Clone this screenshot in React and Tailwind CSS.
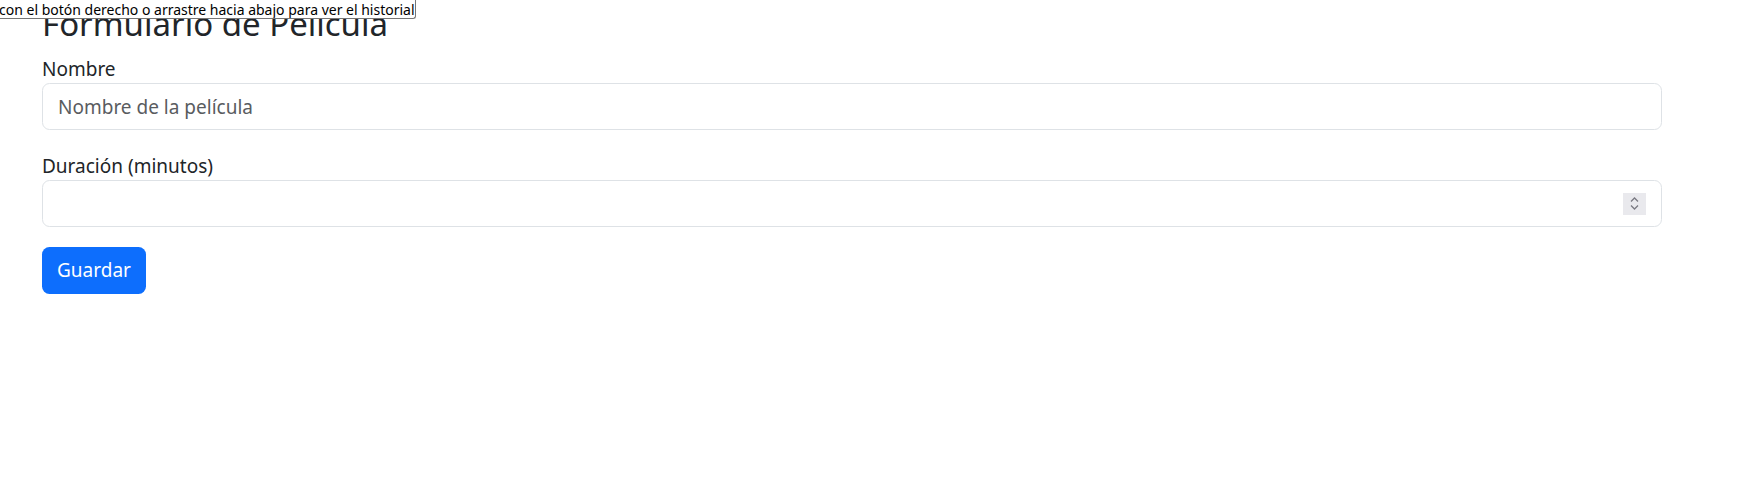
import React from "react";

const FONT = { fontFamily: '"Segoe UI", "Noto Sans", "Liberation Sans", sans-serif' };

// Flechas del control numérico (se dibujan a mano)
const Spinner = () => (
  <div className="flex h-[22px] w-[23px] flex-col items-center justify-center gap-[3px] bg-[#e9e9ed]">
    <svg width="9" height="5" viewBox="0 0 9 5" fill="none">
      <path d="M1 4.5L4.5 1L8 4.5" stroke="#7a7a82" strokeWidth="1.3" />
    </svg>
    <svg width="9" height="5" viewBox="0 0 9 5" fill="none">
      <path d="M1 0.5L4.5 4L8 0.5" stroke="#7a7a82" strokeWidth="1.3" />
    </svg>
  </div>
);

const App = () => {
  return (
    <div className="relative h-[497px] w-full overflow-hidden bg-white text-[#212529]" style={FONT}>
      {/* tooltip del navegador */}
      <div className="absolute left-0 top-0 z-10 flex h-[19px] w-[416px] items-center overflow-hidden rounded-br-[3px] border-b border-r border-[#767676] bg-white">
        <span className="-ml-[1px] whitespace-nowrap text-[14px] leading-[19px] text-black">
          con el botón derecho o arrastre hacia abajo para ver el historial
        </span>
      </div>

      <div className="w-[1662px] pl-[42px]">
        <h3 className="mb-[8px] mt-[3px] text-[33px] font-normal leading-[42px]">
          Formulario de Película
        </h3>

        <form className="flex flex-col">
          <div className="mb-[20px]">
            <label className="block pt-[2px] text-[19px] leading-[28px]">Nombre</label>
            <input
              type="text"
              placeholder="Nombre de la película"
              className="h-[47px] w-full rounded-[7.5px] border border-[#dee2e6] px-[15px] text-[19px] outline-none placeholder:text-[#595c5f]"
            />
          </div>

          <div className="mb-[20px]">
            <label className="block pt-[2px] text-[19px] leading-[28px]">Duración (minutos)</label>
            <div className="flex h-[47px] w-full items-center rounded-[7.5px] border border-[#dee2e6] px-[15px]">
              <input type="text" className="min-w-0 flex-1 text-[19px] outline-none" />
              <Spinner />
            </div>
          </div>

          <div>
            <button
              type="button"
              className="h-[47px] rounded-[7.5px] bg-[#0d6efd] px-[15px] text-[19px] text-white"
            >
              Guardar
            </button>
          </div>
        </form>
      </div>
    </div>
  );
};

export default App;
